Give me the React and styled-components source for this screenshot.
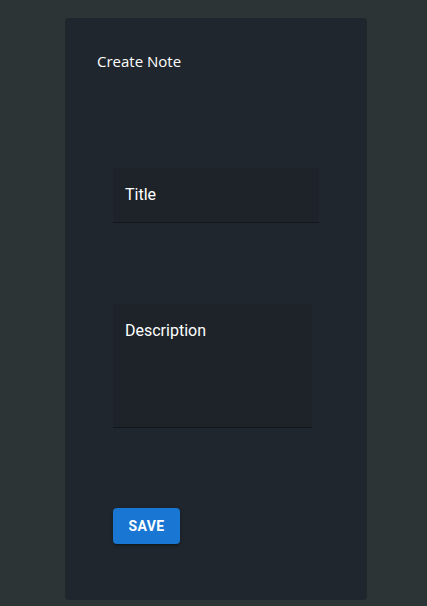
import React from "react";
import styled, { createGlobalStyle } from "styled-components";

const Global = createGlobalStyle`
  html, body { margin: 0; padding: 0; background: #2d3435; }
  body { height: 606px; overflow: hidden; }
`;

const Page = styled.div`
  padding: 18px 0 0 65px;
  height: 606px;
  box-sizing: border-box;
`;

const Card = styled.div`
  width: 302px;
  height: 582px;
  box-sizing: border-box;
  background: #1f262d;
  border-radius: 4px;
  padding: 31px 0 0 32px;
  display: flex;
  flex-direction: column;
`;

const Heading = styled.h2`
  margin: 0;
  font-family: "Open Sans", "Noto Sans", sans-serif;
  font-weight: 400;
  font-size: 15px;
  line-height: 24px;
  color: #ffffff;
`;

const Form = styled.form`
  display: flex;
  flex-direction: column;
  align-items: flex-start;
  padding-left: 16px;
  margin-top: 95px;
`;

const Field = styled.div`
  width: ${(p) => p.$w}px;
  height: ${(p) => p.$h}px;
  box-sizing: border-box;
  background: #1d2329;
  border-bottom: 1px solid #11161a;
  padding: 17px 12px 0;
  margin-bottom: ${(p) => p.$mb}px;
  font-family: Roboto, "Liberation Sans", sans-serif;
  font-weight: 400;
  font-size: 16px;
  line-height: 20px;
  color: #ffffff;
`;

const SaveButton = styled.button`
  width: 67px;
  height: 36px;
  border: none;
  border-radius: 4px;
  background: #1976d2;
  color: #ffffff;
  font-family: Roboto, "Liberation Sans", sans-serif;
  font-weight: 700;
  font-size: 14px;
  letter-spacing: 0.4px;
  text-transform: uppercase;
  box-shadow: 0 3px 1px -2px rgba(0,0,0,0.2), 0 2px 2px 0 rgba(0,0,0,0.14), 0 1px 5px 0 rgba(0,0,0,0.12);
  cursor: pointer;
`;

export default function App() {
  return (
    <>
      <Global />
      <Page>
        <Card>
          <Heading>Create Note</Heading>
          <Form onSubmit={(e) => e.preventDefault()}>
            <Field $w={206} $h={55} $mb={81}>Title</Field>
            <Field $w={199} $h={124} $mb={80}>Description</Field>
            <SaveButton type="submit">Save</SaveButton>
          </Form>
        </Card>
      </Page>
    </>
  );
}
